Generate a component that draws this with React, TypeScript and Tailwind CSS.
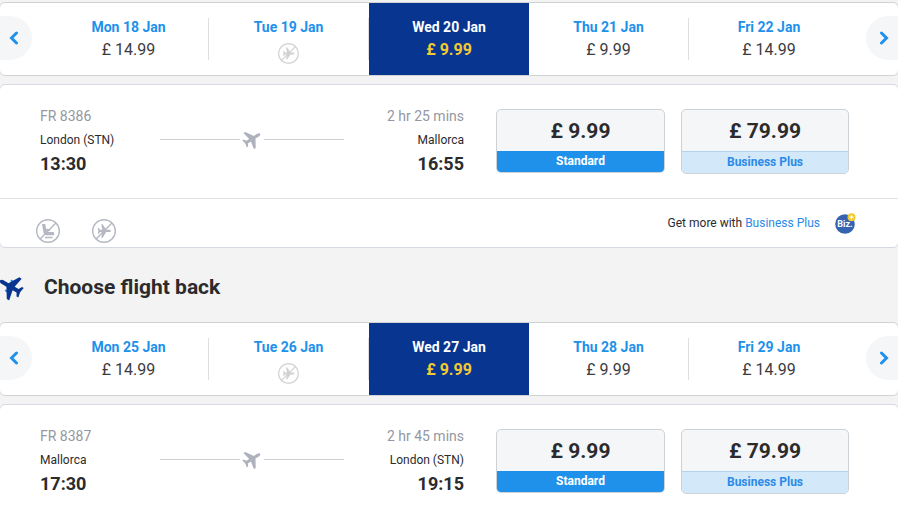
import { useState } from "react";

interface Fare {
  day: string;
  price: string | null;
}

interface Flight {
  code: string;
  duration: string;
  from: string;
  to: string;
  departs: string;
  arrives: string;
}

const outboundDays: Fare[] = [
  { day: "Mon 18 Jan", price: "£ 14.99" },
  { day: "Tue 19 Jan", price: null },
  { day: "Wed 20 Jan", price: "£ 9.99" },
  { day: "Thu 21 Jan", price: "£ 9.99" },
  { day: "Fri 22 Jan", price: "£ 14.99" },
];

const returnDays: Fare[] = [
  { day: "Mon 25 Jan", price: "£ 14.99" },
  { day: "Tue 26 Jan", price: null },
  { day: "Wed 27 Jan", price: "£ 9.99" },
  { day: "Thu 28 Jan", price: "£ 9.99" },
  { day: "Fri 29 Jan", price: "£ 14.99" },
];

const outbound: Flight = {
  code: "FR 8386",
  duration: "2 hr 25 mins",
  from: "London (STN)",
  to: "Mallorca",
  departs: "13:30",
  arrives: "16:55",
};

const inbound: Flight = {
  code: "FR 8387",
  duration: "2 hr 45 mins",
  from: "Mallorca",
  to: "London (STN)",
  departs: "17:30",
  arrives: "19:15",
};

// Plane seen from above, nose pointing right. Callers rotate it as needed.
const PLANE =
  "M23.8 12c0 1-1.4 1.900-3.200 1.900h-4.800L9.800 23.600H7.300l1.900-9.700H5L3.200 17H1.300L2.300 12 1.300 7h1.900L5 10.100h4.200L7.300 .4h2.500l6 9.700h4.800c1.800 0 3.200.9 3.200 1.900z";

function PlaneIcon({ className, engines = false }: { className?: string; engines?: boolean }) {
  return (
    <svg viewBox="0 0 24 24" fill="currentColor" className={className} aria-hidden="true">
      {engines && (
        <g fill="#2091eb">
          <rect x="12" y="5.8" width="3.4" height="2" rx="1" />
          <rect x="12" y="16.2" width="3.4" height="2" rx="1" />
        </g>
      )}
      <path d={PLANE} />
    </svg>
  );
}

function NoFlightIcon({ className }: { className?: string }) {
  return (
    <svg viewBox="0 0 24 24" className={className} aria-hidden="true">
      <circle cx="12" cy="12" r="11.3" fill="none" stroke="currentColor" strokeWidth="1.4" />
      <path d={PLANE} fill="currentColor" transform="translate(5 5) scale(.58)" />
      <path d="M4.100 19.900 19.900 4.100" stroke="currentColor" strokeWidth="1.4" />
    </svg>
  );
}

function NoSeatIcon({ className }: { className?: string }) {
  return (
    <svg viewBox="0 0 24 24" className={className} aria-hidden="true">
      <circle cx="12" cy="12" r="11.3" fill="none" stroke="currentColor" strokeWidth="1.4" />
      <path
        d="M6 5h3.200l1 5h4v1.800h-3.600l.2 1.200h6.200a1.200 1.200 0 0 1 1.200 1.200v2H10.300a2.800 2.800 0 0 1-2.700-2.200z"
        fill="currentColor"
      />
      <path d="M9 18.500h7.500M4.100 19.900 19.900 4.100" stroke="currentColor" strokeWidth="1.4" />
    </svg>
  );
}

function BizIcon() {
  return (
    <svg viewBox="0 0 21 21" className="size-[21px]" aria-hidden="true">
      <circle cx="10" cy="11" r="9.8" fill="#3563b0" />
      <text
        x="10"
        y="14"
        textAnchor="middle"
        fill="#fff"
        fontFamily="Roboto, sans-serif"
        fontSize="9"
        fontWeight="700"
      >
        Biz.
      </text>
      <circle cx="16.500" cy="4.200" r="4" fill="#f1c933" />
      <path d="M16.500 2.200v4M14.500 4.200h4" stroke="#fff" strokeWidth="1.2" />
    </svg>
  );
}

function ArrowButton({ direction }: { direction: "left" | "right" }) {
  const isLeft = direction === "left";
  return (
    <button
      type="button"
      aria-label={isLeft ? "Previous dates" : "Next dates"}
      className={`mb-0.5 flex h-11 w-8 shrink-0 items-center bg-[#f4f6f8] text-[#2091eb] ${
        isLeft ? "mr-[17px] justify-start rounded-r-full pl-2" : "ml-[17px] justify-end rounded-l-full pr-2"
      }`}
    >
      <svg viewBox="0 0 12 14" className="h-[14px] w-3" fill="none" aria-hidden="true">
        <path
          d={isLeft ? "M8.500 2 3.500 7l5 5" : "M3.500 2l5 5-5 5"}
          stroke="currentColor"
          strokeWidth="3"
          strokeLinecap="round"
        />
      </svg>
    </button>
  );
}

function DateBar({ days, label }: { days: Fare[]; label: string }) {
  const [selected, setSelected] = useState(2);

  return (
    <nav
      aria-label={label}
      className="-mx-px flex items-center rounded-md border border-[#d0d2d5] bg-white"
    >
      <ArrowButton direction="left" />
      <div className="flex flex-1">
        {days.map(({ day, price }, i) => {
          const active = i === selected;
          return (
            <button
              key={day}
              type="button"
              aria-pressed={active}
              onClick={() => setSelected(i)}
              className={`h-[72px] flex-1 py-[15px] ${active ? "bg-[#073590]" : ""}`}
            >
              <span
                className={`flex h-[42px] flex-col items-center ${
                  active || i === days.length - 1 ? "" : "border-r border-[#dcdfe2]"
                }`}
              >
                <span
                  className={`text-sm leading-[18px] font-bold ${active ? "text-white" : "text-[#2091eb]"}`}
                >
                  {day}
                </span>
                {price ? (
                  <span
                    className={`mt-0.5 text-base leading-6 ${
                      active ? "font-bold text-[#f1c933]" : "text-[#3c3c3f]"
                    }`}
                  >
                    {price}
                  </span>
                ) : (
                  <NoFlightIcon className="mt-[7px] size-[21px] shrink-0 text-[#cfd1d3]" />
                )}
              </span>
            </button>
          );
        })}
      </div>
      <ArrowButton direction="right" />
    </nav>
  );
}

function FareButtons() {
  return (
    <div className="flex items-start gap-4">
      <button
        type="button"
        className="w-[169px] overflow-hidden rounded-[5px] border border-[#cdd2d6] bg-[#f4f6f8]"
      >
        <span className="block pt-px text-[21px] leading-10 font-bold text-[#2b2b2e]">£ 9.99</span>
        <span className="block bg-[#2091eb] text-xs leading-[21px] font-bold text-white">
          Standard
        </span>
      </button>
      <button
        type="button"
        className="w-[168px] overflow-hidden rounded-[5px] border border-[#cdd2d6] bg-[#f4f6f8]"
      >
        <span className="block pt-px text-[21px] leading-10 font-bold text-[#2b2b2e]">£ 79.99</span>
        <span className="block border-t border-[#b1d3ec] bg-[#d3e8f9] text-xs leading-[21px] font-bold text-[#2b8ae8]">
          Business Plus
        </span>
      </button>
    </div>
  );
}

function FlightCard({ flight, footer = false }: { flight: Flight; footer?: boolean }) {
  return (
    <section className="-mx-px mt-2 rounded-md border border-[#d5d9e0] bg-white">
      <div className="flex items-start gap-8 py-6 pr-[49px] pl-10">
        <div className="flex flex-1">
          <div className="w-[120px]">
            <p className="text-sm leading-[14px] text-[#94979f]">{flight.code}</p>
            <p className="mt-[9px] text-xs leading-4 text-[#2b2b2e]">{flight.from}</p>
            <p className="mt-1.5 text-lg leading-5 font-bold text-[#2b2b2e]">{flight.departs}</p>
          </div>
          <div className="mt-5 flex h-5 flex-1 items-center gap-0.5">
            <span className="h-px flex-1 bg-[#cdd0d4]" />
            <PlaneIcon className="size-5 -rotate-33 text-[#aeb2bd]" />
            <span className="h-px flex-1 bg-[#cdd0d4]" />
          </div>
          <div className="w-[120px] text-right">
            <p className="text-sm leading-[14px] text-[#94979f]">{flight.duration}</p>
            <p className="mt-[9px] text-xs leading-4 text-[#2b2b2e]">{flight.to}</p>
            <p className="mt-1.5 text-lg leading-5 font-bold text-[#2b2b2e]">{flight.arrives}</p>
          </div>
        </div>
        <FareButtons />
      </div>
      {footer && (
        <div className="flex h-[49px] items-center border-t border-[#dfe0e3] pr-[42px] pl-9">
          <div className="flex gap-8 pt-4 text-[#b5b8c2]">
            <NoSeatIcon className="size-6" />
            <NoFlightIcon className="size-6" />
          </div>
          <p className="ml-auto text-xs text-[#2b2b2e]">
            Get more with{" "}
            <a href="#business-plus" className="text-[#2b8ae8]">
              Business Plus
            </a>
          </p>
          <span className="ml-[15px]">
            <BizIcon />
          </span>
        </div>
      )}
    </section>
  );
}

export default function App() {
  return (
    <main className="min-h-screen overflow-hidden bg-[#f3f3f3] pt-[2px] font-['Roboto',sans-serif]">
      <DateBar days={outboundDays} label="Outbound dates" />
      <FlightCard flight={outbound} footer />

      <div className="flex h-[74px] items-center gap-5 pt-1">
        <PlaneIcon className="-ml-0.5 size-[26px] rotate-210 text-[#073590]" engines />
        <h2 className="text-[21px] leading-7 font-bold text-[#2b2b2e]">Choose flight back</h2>
      </div>

      <DateBar days={returnDays} label="Return dates" />
      <FlightCard flight={inbound} />
    </main>
  );
}
